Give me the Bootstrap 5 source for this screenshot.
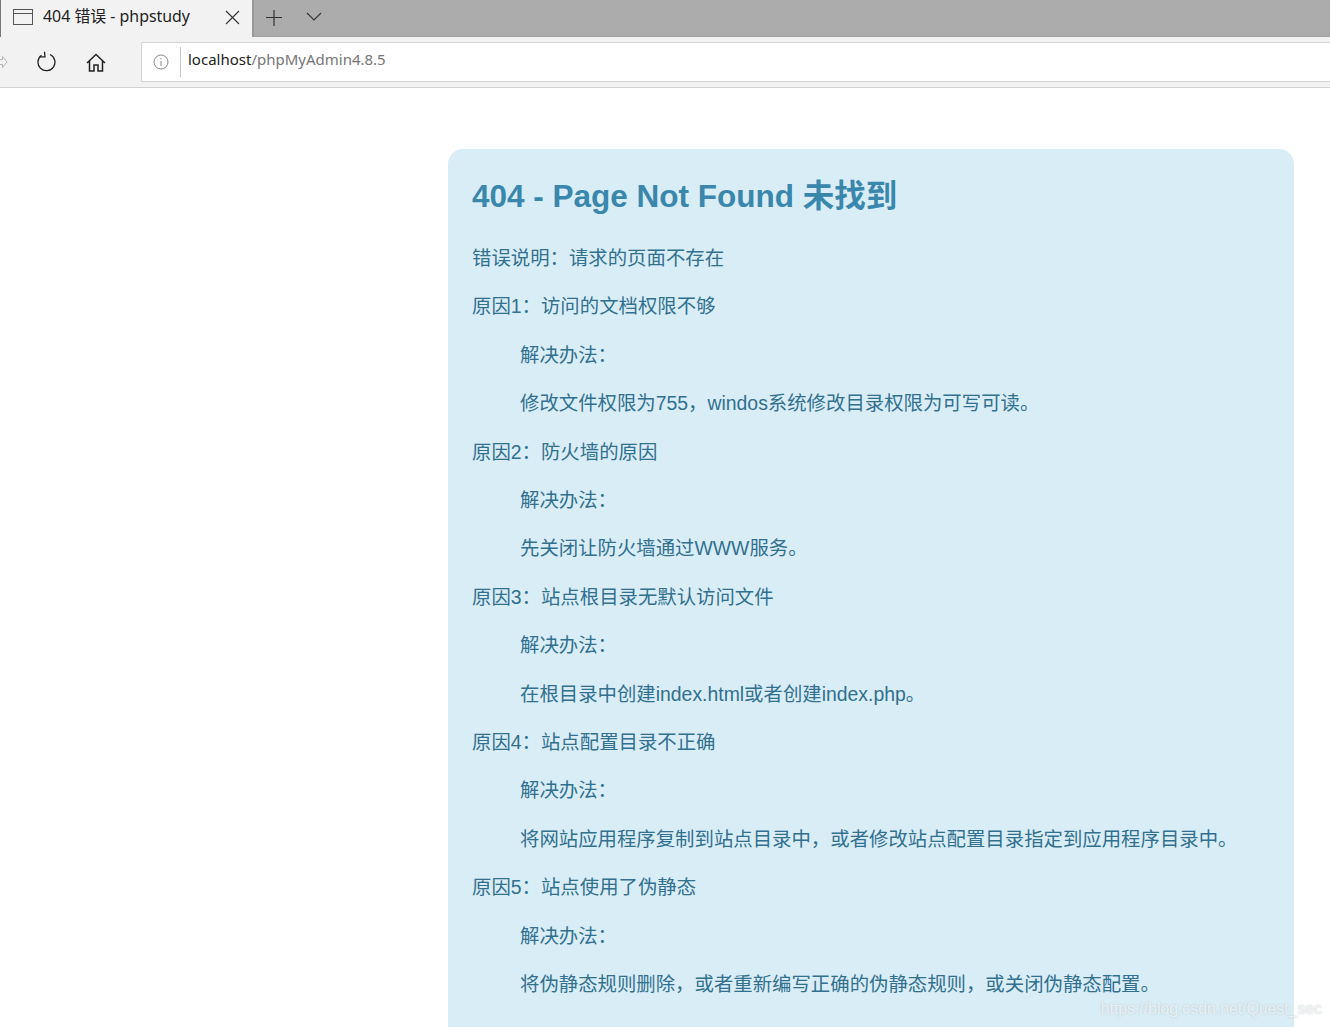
<!DOCTYPE html>
<html lang="zh-CN">
<head>
<meta charset="utf-8">
<title>404 错误 - phpstudy</title>
<link href="https://cdn.jsdelivr.net/npm/bootstrap@5.3.0/dist/css/bootstrap.min.css" rel="stylesheet">
<style>
html,body{height:1027px;overflow:hidden;background:#fff}
body{font-family:"Liberation Sans","Noto Sans CJK SC",sans-serif}
.ui-font{font-family:"Noto Sans","Noto Sans CJK SC",sans-serif}
.tabstrip{height:37px;background:#acacac;box-shadow:inset 0 -2px 2px -1px rgba(0,0,0,.08)}
.brow-tab{width:254px;height:37px;padding-bottom:3px;background:#f2f2f2;border-left:1px solid #777;border-right:2px solid #999;padding-left:12px;font-size:15.9px;color:#222}
.tab-text{margin-left:10px;width:182px;white-space:nowrap}
.plus-ico{margin-left:10px;margin-bottom:1px}
.chev-ico{margin-left:21px;margin-bottom:3px}
.tool-strip{height:51px;background:#f2f2f2;border-bottom:1px solid #d2d2d2}
.fwd-slot{width:21px}
.nav-slot{width:50px}
.reload-ico{margin-left:2px}
.addr{height:40px;margin-top:5px;margin-left:20px;background:#fff;border:1px solid #d4d4d4;border-right:0;font-size:15px}
.info-slot{width:39px;height:30px;border-right:1px solid #c8c8c8}
.url-host{color:#222}
.url-path{color:#767676}
.url-box{padding-left:7px;margin-top:-5px}
.page-wrap{padding-top:61px;padding-left:448px}
.notice-panel{width:846px;height:878px;overflow:hidden;background:#d9edf7;color:#31708f;border-radius:15px 15px 0 0;padding:24px}
.notice-title{font-size:31.5px;font-weight:700;line-height:46px;margin:0 0 25px;color:#3a87ad}
.notice-line{font-size:19.4px;line-height:28.4px;margin:0 0 20px;white-space:nowrap}
.notice-sub{padding-left:48px}
.mark-wm{position:absolute;right:8px;top:998px;font-size:15.8px;line-height:22px;color:rgba(240,244,246,.9);text-shadow:0 0 2px rgba(110,120,130,.35)}
</style>
</head>
<body class="position-relative">
<div class="tabstrip d-flex align-items-center ui-font">
  <div class="brow-tab d-flex align-items-center">
    <svg width="20" height="16" viewBox="0 0 20 16" fill="none" stroke="#555" stroke-width="1"><rect x=".5" y=".5" width="19" height="15"/><path d="M.5 4.500h19"/></svg>
    <span class="tab-text">404 错误 - phpstudy</span>
    <svg width="15" height="15" viewBox="0 0 15 15" fill="none" stroke="#333" stroke-width="1.1"><path d="M1 1l13 13M14 1L1 14"/></svg>
  </div>
  <svg class="plus-ico" width="20" height="20" viewBox="0 0 20 20" fill="none" stroke="#333" stroke-width="1.2"><path d="M10 2v16M2 9.500h16"/></svg>
  <svg class="chev-ico" width="18" height="12" viewBox="0 0 18 12" fill="none" stroke="#333" stroke-width="1.1"><path d="M2 2l7 7 7-7"/></svg>
</div>
<div class="tool-strip d-flex ui-font">
  <div class="fwd-slot d-flex align-items-center">
    <svg width="8" height="14" viewBox="0 0 8 14" fill="none" stroke="#b5b5b5" stroke-width="1"><path d="M0 4.500h2.500V1.500L7 7l-4.500 5.500V9.500H0"/></svg>
  </div>
  <div class="nav-slot d-flex align-items-center justify-content-center">
    <svg class="reload-ico" width="20" height="22" viewBox="0 0 20 22" fill="none" stroke="#222" stroke-width="1.3"><path d="M13 3.500a8.500 8.500 0 1 1-8.500 .800"/><path d="M7.500 .8L8 5.800 2.800 5.800"/></svg>
  </div>
  <div class="nav-slot d-flex align-items-center justify-content-center">
    <svg width="20" height="19" viewBox="0 0 20 19" fill="none" stroke="#222" stroke-width="1.5"><path d="M1 10L10 1.500 19 10M3.500 8v10h4.500v-6h4v6h4.500V8"/></svg>
  </div>
  <div class="addr flex-grow-1 d-flex align-items-center">
    <div class="info-slot d-flex align-items-center justify-content-center">
      <svg width="16" height="16" viewBox="0 0 16 16" fill="none" stroke="#8a8a8a" stroke-width="1"><circle cx="8" cy="8" r="7"/><path d="M8 7v5M8 4v1.500"/></svg>
    </div>
    <div class="url-box"><span class="url-host">localhost</span><span class="url-path">/phpMyAdmin4.8.5</span></div>
  </div>
</div>
<main class="page-wrap">
  <section class="notice-panel">
    <h1 class="notice-title">404 - Page Not Found 未找到</h1>
    <p class="notice-line">错误说明：请求的页面不存在</p>
    <p class="notice-line">原因1：访问的文档权限不够</p>
    <p class="notice-line notice-sub">解决办法：</p>
    <p class="notice-line notice-sub">修改文件权限为755，windos系统修改目录权限为可写可读。</p>
    <p class="notice-line">原因2：防火墙的原因</p>
    <p class="notice-line notice-sub">解决办法：</p>
    <p class="notice-line notice-sub">先关闭让防火墙通过WWW服务。</p>
    <p class="notice-line">原因3：站点根目录无默认访问文件</p>
    <p class="notice-line notice-sub">解决办法：</p>
    <p class="notice-line notice-sub">在根目录中创建index.html或者创建index.php。</p>
    <p class="notice-line">原因4：站点配置目录不正确</p>
    <p class="notice-line notice-sub">解决办法：</p>
    <p class="notice-line notice-sub">将网站应用程序复制到站点目录中，或者修改站点配置目录指定到应用程序目录中。</p>
    <p class="notice-line">原因5：站点使用了伪静态</p>
    <p class="notice-line notice-sub">解决办法：</p>
    <p class="notice-line notice-sub">将伪静态规则删除，或者重新编写正确的伪静态规则，或关闭伪静态配置。</p>
  </section>
</main>
<div class="mark-wm">https://blog.csdn.net/Quest_sec</div>
</body>
</html>
